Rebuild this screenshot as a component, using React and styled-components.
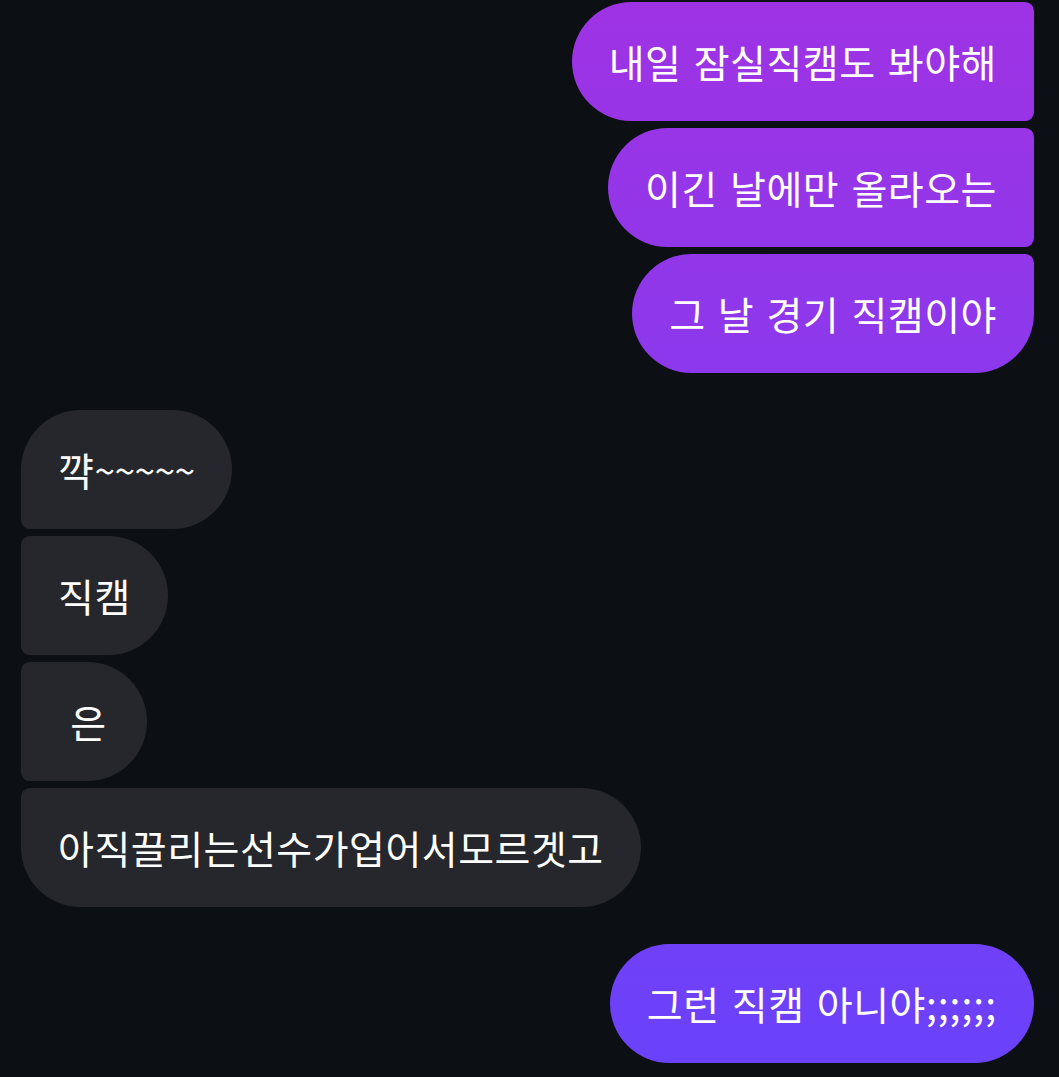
import React from 'react';
import styled, { createGlobalStyle, css } from 'styled-components';

const GlobalStyle = createGlobalStyle`
  html, body {
    margin: 0;
    padding: 0;
    background: #0c0f13;
  }
  body {
    font-family: "Noto Sans CJK KR", "Noto Sans", sans-serif;
  }
`;

const Thread = styled.main`
  display: flex;
  flex-direction: column;
  gap: 37px;
  padding: 2px 25px 15px 21px;
  min-height: 1077px;
  box-sizing: border-box;
`;

const Group = styled.section`
  display: flex;
  flex-direction: column;
  align-items: ${(p) => (p.$mine ? 'flex-end' : 'flex-start')};
  gap: 7px;
`;

const BIG = '60px';
const SMALL = '9px';

// corner shapes depend on where a bubble sits in its run of messages
const mineCorners = (pos) => {
  const top = pos === 'single' ? BIG : SMALL;
  const bottom = pos === 'last' || pos === 'single' ? BIG : SMALL;
  return css`
    border-radius: ${BIG} ${top} ${bottom} ${BIG};
  `;
};

const theirCorners = (pos) => {
  const top = pos === 'first' || pos === 'single' ? BIG : SMALL;
  const bottom = pos === 'last' || pos === 'single' ? BIG : SMALL;
  return css`
    border-radius: ${top} ${BIG} ${BIG} ${bottom};
  `;
};

const Bubble = styled.div`
  box-sizing: border-box;
  height: 119px;
  display: flex;
  align-items: center;
  padding: 0 37px;
  font-size: 39px;
  line-height: 45px;
  letter-spacing: 0.5px;
  word-spacing: 3px;
  color: #ffffff;
  white-space: pre;
  ${(p) =>
    p.$mine
      ? css`
          background: linear-gradient(180deg, #9e33e4 0px, #6a42fb 1077px);
          background-attachment: fixed;
          ${mineCorners(p.$pos)}
        `
      : css`
          background: #25272c;
          ${theirCorners(p.$pos)}
        `}
`;

const Wave = styled.span`
  letter-spacing: -0.5px;
  font-size: 37px;
`;

const Semis = styled.span`
  letter-spacing: 1px;
`;

const positionOf = (i, n) => {
  if (n === 1) return 'single';
  if (i === 0) return 'first';
  if (i === n - 1) return 'last';
  return 'middle';
};

const groups = [
  { mine: true, lines: ['내일 잠실직캠도 봐야해', '이긴 날에만 올라오는', '그 날 경기 직캠이야'] },
  {
    mine: false,
    lines: [
      <>꺅<Wave>~~~~~</Wave></>,
      '직캠',
      ' 은\u200A',
      '아직끌리는선수가업어서모르겟고',
    ],
  },
  { mine: true, lines: [<>그런 직캠 아니야<Semis>;;;;;;</Semis></>] },
];

export default function App() {
  return (
    <>
      <GlobalStyle />
      <Thread>
        {groups.map((g, gi) => (
          <Group key={gi} $mine={g.mine}>
            {g.lines.map((line, i) => (
              <Bubble key={i} $mine={g.mine} $pos={positionOf(i, g.lines.length)}>
                {line}
              </Bubble>
            ))}
          </Group>
        ))}
      </Thread>
    </>
  );
}
